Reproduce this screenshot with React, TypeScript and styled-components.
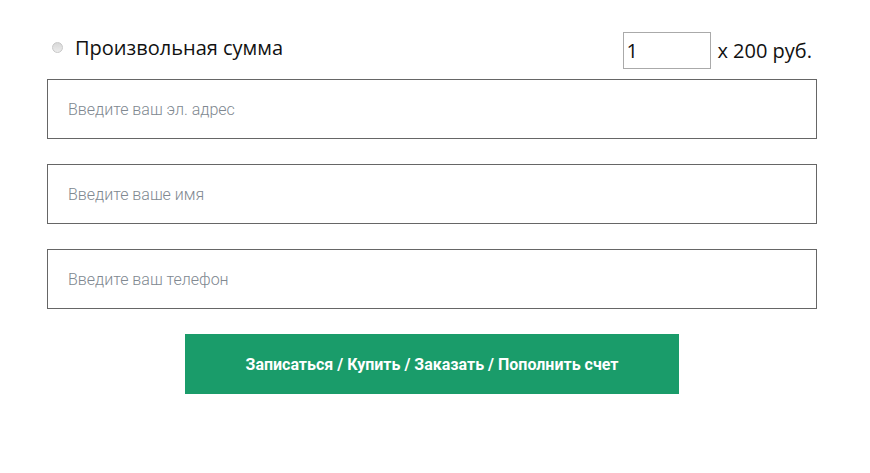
import React from "react";
import styled, { createGlobalStyle } from "styled-components";

const GlobalStyle = createGlobalStyle`
  body {
    margin: 0;
    background: #fff;
    font-family: "Open Sans", sans-serif;
  }
`;

const Page = styled.div`
  padding: 32px 0 0 47px;
`;

const Form = styled.form`
  width: 770px;
  display: flex;
  flex-direction: column;
`;

const TopRow = styled.div`
  display: flex;
  align-items: flex-start;
  justify-content: space-between;
  height: 36px;
  margin-bottom: 11px;
`;

const RadioLabel = styled.label`
  display: flex;
  align-items: center;
  gap: 12px;
  font-family: "Open Sans", sans-serif;
  font-size: 20px;
  color: #111;
  margin-top: 2px;
`;

const RadioDot = styled.span`
  width: 11px;
  height: 11px;
  margin-left: 5px;
  border-radius: 50%;
  border: 1px solid #c8c8c8;
  background: linear-gradient(#d8d8d8, #ececec);
  box-sizing: border-box;
`;

const Qty = styled.div`
  display: flex;
  align-items: center;
  gap: 6px;
  margin-right: 5px;
  font-size: 20px;
  color: #111;
`;

const QtyInput = styled.input`
  width: 88px;
  height: 37px;
  box-sizing: border-box;
  border: 1px solid #aaa;
  padding: 0 2px;
  font-family: "Open Sans", sans-serif;
  font-size: 20px;
  color: #111;
  outline: none;
`;

const Field = styled.input`
  width: 770px;
  height: 60px;
  box-sizing: border-box;
  border: 1px solid #666;
  padding: 0 20px;
  margin-bottom: 25px;
  font-family: Roboto, sans-serif;
  font-size: 16px;
  font-weight: 300;
  color: #333;
  outline: none;

  &::placeholder {
    color: #808890;
  }
`;

const Submit = styled.button`
  align-self: center;
  width: 494px;
  height: 60px;
  border: none;
  background: #1a9c6a;
  color: #fff;
  font-family: Roboto, sans-serif;
  font-weight: 700;
  font-size: 16px;
  cursor: pointer;
`;

const App: React.FC = () => {
  return (
    <Page>
      <GlobalStyle />
      <Form onSubmit={(e) => e.preventDefault()}>
        <TopRow>
          <RadioLabel>
            <RadioDot />
            Произвольная сумма
          </RadioLabel>
          <Qty>
            <QtyInput defaultValue="1" />
            <span>x 200 руб.</span>
          </Qty>
        </TopRow>
        <Field placeholder="Введите ваш эл. адрес" />
        <Field placeholder="Введите ваше имя" />
        <Field placeholder="Введите ваш телефон" />
        <Submit type="submit">Записаться / Купить / Заказать / Пополнить счет</Submit>
      </Form>
    </Page>
  );
};

export default App;
